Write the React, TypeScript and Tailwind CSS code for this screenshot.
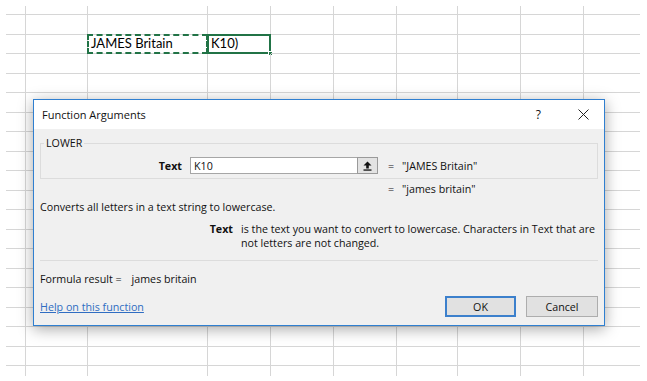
import React from "react";

const COLS = 10;
const ROWS = 20;

function UpArrowIcon() {
  return (
    <svg width="9" height="10" viewBox="0 0 9 10">
      <path d="M4.5 0.5 L8.5 4.6 L5.8 4.6 L5.8 7.4 L3.2 7.4 L3.2 4.6 L0.5 4.6 Z" fill="#111" />
      <rect x="0.5" y="8.4" width="8" height="1.3" fill="#111" />
    </svg>
  );
}

function CloseIcon() {
  return (
    <svg width="11" height="11" viewBox="0 0 11 11">
      <path d="M0.5 0.5 L10.5 10.5 M10.5 0.5 L0.5 10.5" stroke="#222" strokeWidth="1" />
    </svg>
  );
}

function Sheet() {
  const cells = [];
  for (let r = 0; r < ROWS; r++) {
    for (let c = 0; c < COLS; c++) {
      const lastCol = c === COLS - 1;
      const lastRow = r === ROWS - 1;
      let content: React.ReactNode = null;

      // copied source cell (marching ants)
      if (r === 2 && c === 2) {
        content = (
          <>
            <span className="pl-[3px]">JAMES Britain</span>
            <div className="absolute -inset-px border-2 border-dashed border-[#217346]" />
          </>
        );
      }
      // active cell with fill handle
      if (r === 2 && c === 3) {
        content = (
          <>
            <span className="pl-[3px]">K10)</span>
            <div className="absolute -inset-px border-2 border-[#217346]" />
            <div className="absolute -bottom-[3px] -right-[3px] h-[5px] w-[5px] border border-white bg-[#217346]" />
          </>
        );
      }

      cells.push(
        <div
          key={r + "-" + c}
          className={
            "relative flex items-center whitespace-nowrap border-[#d6d6d6] " +
            (lastCol ? "" : "border-r ") +
            (lastRow ? "" : "border-b")
          }
        >
          {content}
        </div>
      );
    }
  }

  return (
    <div className="ml-[6px] mt-[6px] grid grid-cols-[20px_62px_120px_63px_63px_63px_61px_63px_63px_56px] grid-rows-[9px_repeat(9,20px_19px)_10px] font-['Lato',sans-serif] text-[13px] text-black">
      {cells}
    </div>
  );
}

function FunctionArguments() {
  return (
    <div className="absolute left-[33px] top-[99px] flex h-[227px] w-[572px] flex-col border border-[#2f7fd0] bg-[#f0f0f0] font-['Open_Sans',sans-serif] text-[10.7px] leading-[14px] text-[#111] shadow-[0_3px_14px_rgba(0,0,0,0.35)]">
      <div className="flex h-[29px] items-center bg-white pl-[8px]">
        <span className="text-[11px]">Function Arguments</span>
        <span className="ml-auto mr-[37px] text-[12px]">?</span>
        <span className="mr-[15px] flex">
          <CloseIcon />
        </span>
      </div>

      <div className="flex flex-col px-[6px]">
        <fieldset className="mt-[7px] border border-[#dcdcdc] px-0 pb-[4px] pt-[7px]">
          <legend className="ml-[3px] px-[2px] leading-[14px]">LOWER</legend>
          <div className="flex h-[17px] items-center">
            <span className="w-[141px] text-right font-bold">Text</span>
            <div className="ml-[8px] flex h-[17px] w-[188px]">
              <div className="flex flex-1 items-center border border-r-0 border-[#a6a6a6] bg-white pl-[3px]">K10</div>
              <div className="flex w-[21px] items-center justify-center border border-[#9a9a9a] bg-[#e3e3e3]">
                <UpArrowIcon />
              </div>
            </div>
            <span className="ml-[6px] w-[14px] text-center">=</span>
            <span className="ml-[4px]">"JAMES Britain"</span>
          </div>
        </fieldset>

        <div className="mt-[3px] flex">
          <span className="ml-[344px] w-[14px] text-center">=</span>
          <span className="ml-[4px]">"james britain"</span>
        </div>

        <div className="mt-[4px]">Converts all letters in a text string to lowercase.</div>

        <div className="mt-[8px] flex leading-[14px]">
          <span className="w-[193px] text-right font-bold">Text</span>
          <span className="ml-[8px] whitespace-nowrap">
            is the text you want to convert to lowercase. Characters in Text that are
            <br />
            not letters are not changed.
          </span>
        </div>

        <div className="mt-[10px] h-px bg-[#dcdcdc]" />

        <div className="mt-[11px] flex">
          <span>Formula result =</span>
          <span className="ml-[10px]">james britain</span>
        </div>

        <div className="mt-[10px] flex items-center">
          <a href="#" className="text-[#2f6dc2] underline">
            Help on this function
          </a>
          <div className="ml-auto flex gap-[10px]">
            <button className="h-[21px] w-[71px] border-2 border-[#3c80cc] bg-[#e1e1e1]">OK</button>
            <button className="h-[21px] w-[72px] border border-[#adadad] bg-[#e1e1e1]">Cancel</button>
          </div>
        </div>
      </div>
    </div>
  );
}

export default function App() {
  return (
    <div className="relative h-[381px] w-[647px] overflow-hidden bg-white">
      <Sheet />
      <FunctionArguments />
    </div>
  );
}
